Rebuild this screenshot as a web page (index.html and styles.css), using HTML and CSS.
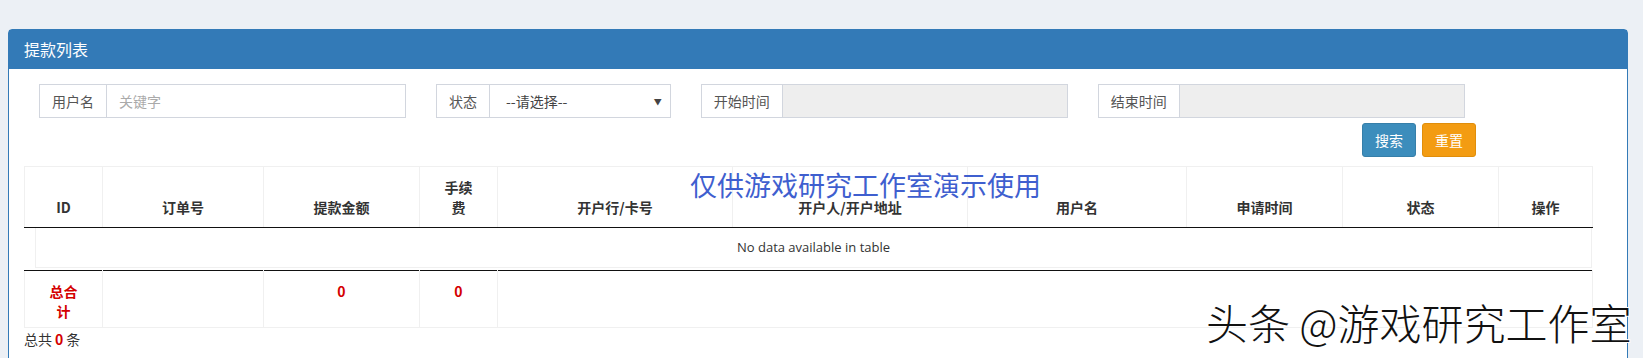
FILE: index.html
```html
<!DOCTYPE html>
<html lang="zh-CN">
<head>
    <meta charset="UTF-8">
    <title>提款列表</title>
    <link rel="stylesheet" href="styles.css">
</head>
<body>

    <!-- Withdraw list panel -->
    <div class="panel">
        <div class="panel-heading">提款列表</div>
        <div class="panel-body">

            <!-- Filters -->
            <div class="filters">
                <div class="col col-3">
                    <div class="input-group">
                        <span class="addon">用户名</span>
                        <input type="text" class="field" placeholder="关键字">
                    </div>
                </div>
                <div class="col col-2">
                    <div class="input-group">
                        <span class="addon">状态</span>
                        <div class="field select">--请选择--<span class="caret">&#9660;</span></div>
                    </div>
                </div>
                <div class="col col-3">
                    <div class="input-group">
                        <span class="addon">开始时间</span>
                        <input type="text" class="field" readonly>
                    </div>
                </div>
                <div class="col col-3">
                    <div class="input-group">
                        <span class="addon">结束时间</span>
                        <input type="text" class="field" readonly>
                    </div>
                </div>
            </div>

            <div class="actions">
                <button class="btn btn-search">搜索</button>
                <button class="btn btn-reset">重置</button>
            </div>

            <!-- Table -->
            <div class="table-wrap">
                <table class="grid head">
                    <colgroup>
                        <col style="width:78px"><col style="width:161px"><col style="width:156px"><col style="width:78px">
                        <col style="width:235px"><col style="width:235px"><col style="width:219px"><col style="width:156px">
                        <col style="width:156px"><col style="width:94px">
                    </colgroup>
                    <thead>
                        <tr>
                            <th>ID</th>
                            <th>订单号</th>
                            <th>提款金额</th>
                            <th>手续<br>费</th>
                            <th>开户行/卡号</th>
                            <th>开户人/开户地址</th>
                            <th>用户名</th>
                            <th>申请时间</th>
                            <th>状态</th>
                            <th>操作</th>
                        </tr>
                    </thead>
                </table>

                <div class="empty">No data available in table</div>

                <table class="grid foot">
                    <colgroup>
                        <col style="width:78px"><col style="width:161px"><col style="width:156px"><col style="width:78px">
                        <col style="width:1095px">
                    </colgroup>
                    <tfoot>
                        <tr>
                            <th class="red">总合<br>计</th>
                            <th></th>
                            <th class="red">0</th>
                            <th class="red">0</th>
                            <th></th>
                        </tr>
                    </tfoot>
                </table>
            </div>

            <div class="total">总共<b>0</b>条</div>
        </div>
    </div>

    <!-- Watermarks -->
    <div class="mark">仅供游戏研究工作室演示使用</div>
    <div class="credit">头条 @游戏研究工作室</div>

</body>
</html>
```

FILE: styles.css
```css
/* Base */
html, body {
    margin: 0;
    height: 358px;
    overflow: hidden;
}

body {
    background-color: #ecf0f5;
    font-family: "Noto Sans CJK SC", "Noto Sans", sans-serif;
    font-size: 14px;
    color: #333;
    position: relative;
}

/* Panel */
.panel {
    margin: 29px 0 0 8px;
    width: 1618px;
    border: 1px solid #337ab7;
    border-radius: 4px 4px 0 0;
    background-color: #fff;
    height: 400px;
}

.panel-heading {
    background-color: #337ab7;
    color: #fff;
    font-size: 16px;
    line-height: 20px;
    padding: 9px 15px 10px;
}

.panel-body {
    padding: 15px;
}

/* Filters */
.filters {
    display: grid;
    grid-template-columns: repeat(12, 1fr);
}

.col {
    padding: 0 15px;
}

.col-2 { grid-column: span 2; }
.col-3 { grid-column: span 3; }

.input-group {
    display: flex;
    height: 34px;
}

.addon {
    border: 1px solid #d2d6de;
    border-right: none;
    padding: 0 12px;
    line-height: 32px;
    color: #555;
    background-color: #fff;
    white-space: nowrap;
}

.field {
    flex: 1;
    min-width: 0;
    box-sizing: border-box;
    height: 34px;
    border: 1px solid #d2d6de;
    padding: 0 12px;
    font-family: inherit;
    font-size: 14px;
    color: #555;
    background-color: #fff;
    outline: none;
}

.field::placeholder {
    color: #aaa;
}

.field[readonly] {
    background-color: #eee;
}

.select {
    display: flex;
    align-items: center;
    justify-content: space-between;
    padding: 0 8px 0 16px;
    color: #444;
}

.caret {
    font-size: 8px;
    color: #444;
}

/* Buttons */
.actions {
    display: flex;
    justify-content: flex-end;
    gap: 6px;
    margin-top: 5px;
    padding-right: 136px;
}

.btn {
    width: 54px;
    height: 34px;
    border: 1px solid transparent;
    border-radius: 3px;
    color: #fff;
    font-family: inherit;
    font-size: 14px;
    cursor: pointer;
}

.btn-search {
    background-color: #3c8dbc;
    border-color: #367fa9;
}

.btn-reset {
    background-color: #f39c12;
    border-color: #e08e0b;
}

/* Table */
.table-wrap {
    margin-top: 9px;
    width: 1568px;
}

.grid {
    width: 1568px;
    border-collapse: collapse;
    table-layout: fixed;
}

.grid th {
    border: 1px solid #f0f0f0;
    padding: 10px 18px;
    font-size: 14px;
    font-weight: bold;
    line-height: 20px;
    text-align: center;
    vertical-align: bottom;
    color: #333;
}

.grid.head th {
    border-bottom: 1px solid #111;
}

.grid.foot th {
    border-top: 1px solid #111;
    padding: 10px 18px 6px;
    vertical-align: top;
}

.red {
    color: #d40000 !important;
}

.empty {
    margin-left: 11px;
    height: 39px;
    border: 1px solid #f0f0f0;
    border-top: none;
    font-family: "Open Sans", sans-serif;
    font-size: 13px;
    line-height: 39px;
    text-align: center;
    color: #333;
    margin-bottom: 2px;
}

.total {
    line-height: 22px;
}

.total b {
    color: #d40000;
    padding: 0 3px;
}

/* Watermarks */
.mark {
    position: absolute;
    left: 690px;
    top: 170px;
    font-size: 27px;
    line-height: 30px;
    color: #3f5fcf;
    white-space: nowrap;
}

.credit {
    position: absolute;
    left: 1206px;
    top: 299px;
    font-size: 42px;
    line-height: 46px;
    font-weight: 300;
    color: #111;
    white-space: nowrap;
    text-shadow: 1px 1px 0 #fff, -1px -1px 0 #fff, 1px -1px 0 #fff, -1px 1px 0 #fff;
}
```
